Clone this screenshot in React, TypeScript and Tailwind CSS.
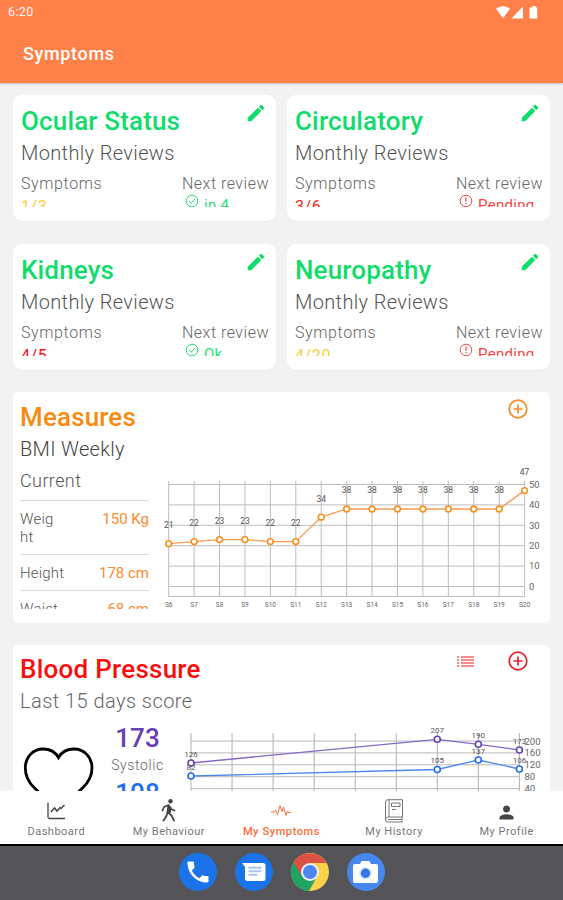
import type { ReactNode } from "react";
import { MdEdit, MdPerson, MdPhone } from "react-icons/md";

type ReviewCardProps = {
    title: string;
    score: string;
    scoreClass: string;
    review: string;
    done: boolean;
};

const reviews: ReviewCardProps[] = [
    { title: "Ocular Status", score: "1/3", scoreClass: "text-[#f9cf3c]", review: "in 4", done: true },
    { title: "Circulatory", score: "3/6", scoreClass: "text-[#f52a22]", review: "Pending", done: false },
    { title: "Kidneys", score: "4/5", scoreClass: "text-[#f5101c]", review: "Ok", done: true },
    { title: "Neuropathy", score: "4/20", scoreClass: "text-[#f9cf3c]", review: "Pending", done: false },
];

const bmi = [21, 22, 23, 23, 22, 22, 34, 38, 38, 38, 38, 38, 38, 38, 47];

const systolic = [
    { day: 0, value: 126, y: 30 },
    { day: 6, value: 207, y: 6.3 },
    { day: 7, value: 190, y: 11.3 },
    { day: 8, value: 173, y: 17 },
];

const diastolic = [
    { day: 0, value: 82, y: 43 },
    { day: 6, value: 105, y: 36.5 },
    { day: 7, value: 137, y: 27 },
    { day: 8, value: 106, y: 36 },
];

function ReviewIcon({ done }: { done: boolean }) {
    return (
        <svg viewBox="0 0 14 14" className="w-[14px] h-[14px] shrink-0" fill="none" stroke="currentColor" strokeWidth="1">
            <circle cx="7" cy="7" r="5.8" />
            {done ? <path d="M4.2 7.2 6.3 9.2 10 5" /> : <path d="M7 3.6v4.2M7 9.1v1.2" strokeWidth="1.2" />}
        </svg>
    );
}

function ReviewCard({ title, score, scoreClass, review, done }: ReviewCardProps) {
    return (
        <div className="relative h-[126px] bg-white rounded-[9px] pl-[8px] pr-[7px] shadow-[0_1px_1px_rgba(0,0,0,0.03)]">
            <MdEdit className="absolute right-[9px] top-[7px] text-[22px] text-[#10dc6c]" />
            <div className="h-[112px] pt-[10px] overflow-hidden">
                <h2 className="text-[26px] leading-[32px] tracking-[0.15px] font-medium text-[#10dc6c]">{title}</h2>
                <p className="text-[20px] leading-[32px] tracking-[0.36px] font-light text-[#555]">Monthly Reviews</p>
                <div className="flex justify-between text-[#666]">
                    <div>
                        <p className="text-[16px] leading-[30px] tracking-[0.6px] font-light">Symptoms</p>
                        <p className={`-mt-[4px] text-[16px] leading-[24px] tracking-[0.6px] ${scoreClass}`}>{score}</p>
                    </div>
                    <div>
                        <p className="text-[16px] leading-[30px] tracking-[0.5px] font-light">Next review</p>
                        <p className={`flex gap-[5px] pl-[3px] text-[15px] leading-[22px] tracking-[0.3px] -mt-[5px] ${done ? "text-[#2ddc78]" : "text-[#f24848]"}`}>
                            <ReviewIcon done={done} />
                            <span>{review}</span>
                        </p>
                    </div>
                </div>
            </div>
        </div>
    );
}

function AddIcon({ className }: { className: string }) {
    return (
        <svg viewBox="0 0 20 20" className={`w-[20px] h-[20px] ${className}`} fill="none" stroke="currentColor" strokeWidth="1.7">
            <circle cx="10" cy="10" r="8.8" />
            <path d="M10 5.5v9M5.5 10h9" />
        </svg>
    );
}

function BmiChart() {
    const x = (i: number) => 13.7 + i * 25.42;
    const y = (v: number) => 121.5 - v * 2.04;
    return (
        <svg viewBox="0 0 395 150" className="w-[395px] h-[150px] shrink-0 font-[Roboto]">
            {bmi.map((_, i) => (
                <line key={i} x1={x(i)} x2={x(i)} y1="16" y2="131.5" stroke="#bdbdbd" />
            ))}
            {[0, 10, 20, 30, 40, 50].map((v) => (
                <g key={v}>
                    <line x1={x(0)} x2={x(14)} y1={y(v)} y2={y(v)} stroke="#bdbdbd" />
                    <text x="374" y={y(v) + 3.2} fontSize="9.5" fill="#666">{v}</text>
                </g>
            ))}
            <line x1={x(0)} x2={x(14)} y1="131.5" y2="131.5" stroke="#bdbdbd" />
            <polyline points={bmi.map((v, i) => `${x(i)},${y(v)}`).join(" ")} fill="none" stroke="#fb9a56" strokeWidth="1.3" />
            {bmi.map((v, i) => (
                <g key={i} textAnchor="middle">
                    <circle cx={x(i)} cy={y(v)} r="2.9" fill="#fff" stroke="#f7901e" strokeWidth="1.6" />
                    <text x={x(i)} y={y(v) - 15.5} fontSize="8.5" fill="#555">{v}</text>
                    <text x={x(i)} y="142" fontSize="6.5" fill="#666">{`S${i + 6}`}</text>
                </g>
            ))}
        </svg>
    );
}

function PressureChart() {
    const x = (i: number) => 16 + i * 41.05;
    const series = [
        { points: systolic, line: "#8468c8", dot: "#6640b4" },
        { points: diastolic, line: "#4a86f0", dot: "#1f6cf5" },
    ];
    return (
        <svg viewBox="0 0 375 62" className="w-[375px] h-[62px] shrink-0 overflow-visible font-[Roboto]">
            {[0, 1, 2, 3, 4, 5, 6, 7, 8].map((i) => (
                <line key={i} x1={x(i)} x2={x(i)} y1="0" y2="62" stroke="#b0b0b0" />
            ))}
            {[200, 160, 120, 80, 40].map((v, i) => (
                <g key={v}>
                    <line x1={x(0)} x2={x(8)} y1={8 + i * 11.9} y2={8 + i * 11.9} stroke="#b8b8b8" />
                    <text x="349.5" y={11.5 + i * 11.9} fontSize="9.5" fill="#666">{v}</text>
                </g>
            ))}
            {series.map(({ points, line, dot }) => (
                <g key={dot} textAnchor="middle">
                    <polyline points={points.map((p) => `${x(p.day)},${p.y}`).join(" ")} fill="none" stroke={line} strokeWidth="1.3" />
                    {points.map((p) => (
                        <g key={p.day}>
                            <circle cx={x(p.day)} cy={p.y} r="3" fill="#fff" stroke={dot} strokeWidth="1.6" />
                            <text x={x(p.day)} y={p.y - 6.5} fontSize="8" fill="#555">{p.value}</text>
                        </g>
                    ))}
                </g>
            ))}
        </svg>
    );
}

function Measure({ label, value }: { label: string; value: string }) {
    return (
        <div className="flex justify-between border-t border-[#ddd] pt-[9px] pb-[8px] text-[15px] leading-[18px]">
            <span className="w-[48px] font-light tracking-[0.2px] text-[#555] whitespace-pre">{label}</span>
            <span className="text-[#f98a35]">{value}</span>
        </div>
    );
}

function Tab({ label, active, children }: { label: string; active?: boolean; children: ReactNode }) {
    return (
        <div className={`flex-1 flex flex-col items-center pt-[7px] ${active ? "text-[#ff6c37]" : "text-[#444]"}`}>
            <div className="h-[25px] flex items-center justify-center">{children}</div>
            <span className={`pt-[1px] text-[11px] leading-[16px] whitespace-nowrap ${active ? "tracking-[0.6px] font-medium" : "tracking-[0.5px] text-[#777]"}`}>{label}</span>
        </div>
    );
}

export default function App() {
    return (
        <div className="w-[563px] h-[900px] flex flex-col overflow-hidden bg-[#f2f2f2] font-[Roboto,sans-serif]">
            <header className="h-[83px] shrink-0 bg-[#ff8048] text-white shadow-[0_1px_2px_rgba(0,0,0,0.2)]">
                <div className="h-[25px] pl-[8px] pr-[25px] flex items-center justify-between text-[12.5px] tracking-[0.4px]">
                    <span>6:20</span>
                    <svg viewBox="0 0 42 13" className="w-[42px] h-[13px]" fill="currentColor">
                        <path d="M0 2.8C4-.6 10-.6 14 2.8L7 12.3z" />
                        <path d="M27 .5V12.5H15.5z" />
                        <path d="M35 1.5h1.5V0h3.5v1.5h1.2v11h-7.7v-11z" />
                    </svg>
                </div>
                <h1 className="pl-[23px] text-[18px] leading-[58px] font-medium tracking-[0.65px]">Symptoms</h1>
            </header>

            <main className="flex-1 min-h-0 overflow-hidden pt-[12px] px-[13px]">
                <div className="grid grid-cols-2 gap-x-[11px] gap-y-[23px]">
                    {reviews.map((r) => (
                        <ReviewCard key={r.title} {...r} />
                    ))}
                </div>

                {/* Measures */}
                <section className="relative mt-[22px] h-[231px] bg-white rounded-[5px] pl-[7px] pt-[9px]">
                    <AddIcon className="absolute right-[22px] top-[7px] text-[#f98a1e]" />
                    <h2 className="text-[26px] leading-[32px] tracking-[0.15px] font-medium text-[#f98a10]">Measures</h2>
                    <p className="text-[20px] leading-[32px] tracking-[0.3px] font-light text-[#444]">BMI Weekly</p>
                    <div className="flex">
                        <div className="w-[129px] h-[144px] overflow-hidden">
                            <p className="text-[18px] leading-[32px] tracking-[0.4px] pb-[3px] font-light text-[#555]">Current</p>
                            <Measure label={"Weig\nht"} value="150 Kg" />
                            <Measure label="Height" value="178 cm" />
                            <Measure label="Waist" value="68 cm" />
                        </div>
                        <div className="ml-[6px]">
                            <BmiChart />
                        </div>
                    </div>
                </section>

                {/* Blood pressure */}
                <section className="relative mt-[22px] h-[260px] bg-white rounded-[5px] pl-[7px] pt-[8px]">
                    <svg viewBox="0 0 17 11" className="absolute right-[76px] top-[11px] w-[17px] h-[11px] text-[#f56a6a]" stroke="currentColor" strokeWidth="1.3">
                        <path d="M0 1h2.2M0 4h2.2M0 7h2.2M0 10h2.2M4 1h13M4 4h13M4 7h13M4 10h13" />
                    </svg>
                    <AddIcon className="absolute right-[22px] top-[6px] text-[#e8232b]" />
                    <h2 className="text-[26px] leading-[32px] tracking-[0.25px] font-medium text-[#fb0d0d]">Blood Pressure</h2>
                    <p className="text-[20px] leading-[32px] tracking-[0.45px] font-light text-[#666]">Last 15 days score</p>
                    <div className="flex">
                        <svg viewBox="0 0 72 66" className="mt-[30px] ml-[3px] w-[72px] h-[66px]" fill="none" stroke="#000" strokeWidth="2.8">
                            <path d="M35.500 64 11.500 41C4 34 2.300 28 2.300 21C2.300 10 10 2 20 2C28 2 33 6 35.500 10.500C38 6 43 2 51 2C61 2 69 10 69 21C69 28 67 34 59.500 41z" />
                        </svg>
                        <div className="w-[67px] ml-[9px] pt-[1px] text-center">
                            <p className="text-[26px] leading-[40px] font-medium text-[#6640b4]">173</p>
                            <p className="text-[14px] leading-[15px] tracking-[0.6px] font-light text-[#666]">Systolic</p>
                            <p className="text-[26px] leading-[40px] font-medium text-[#1f6cf5]">108</p>
                        </div>
                        <div className="ml-[4px] pt-[16px]">
                            <PressureChart />
                        </div>
                    </div>
                </section>
            </main>

            <nav className="relative h-[53px] shrink-0 flex bg-white">
                <Tab label="Dashboard">
                    <svg viewBox="0 0 18 18" className="w-[18px] h-[18px]" fill="none" stroke="currentColor" strokeWidth="1.3">
                        <path d="M1 .5v14.500q0 1.500 1.500 1.500H18" />
                        <path d="M4 10 7.500 6l2.500 3 3-3.500 1 1 3.500-3.500" strokeWidth="1.500" />
                    </svg>
                </Tab>
                <Tab label="My Behaviour">
                    <svg viewBox="0 0 16 23" className="w-[16px] h-[23px]" fill="none" stroke="currentColor" strokeWidth="1.8" strokeLinecap="round" strokeLinejoin="round">
                        <circle cx="9.500" cy="2.300" r="2.200" fill="currentColor" stroke="none" />
                        <path d="M1.500 11.500 3 8l4.500-2 2.500 4 3.500 1.500M7.500 6.500 6.500 13l4 3.500 2.500 5M6.500 13 5.500 17 2.500 21.500" />
                        <path d="M7.500 6.500 6.500 13l3 .5.500-5" fill="currentColor" strokeWidth="1" />
                    </svg>
                </Tab>
                <Tab label="My Symptoms" active>
                    <svg viewBox="0 0 20 14" className="w-[20px] h-[14px]" fill="none" stroke="currentColor" strokeWidth="1">
                        <path d="M0 8h3l1.500-2 2 4.500L9 1.500l2 6L12.500 3l2.500 8.500L16.500 7l1 1.500H20" />
                    </svg>
                </Tab>
                <Tab label="My History">
                    <svg viewBox="0 0 18 24" className="w-[18px] h-[24px] text-[#777]" fill="none" stroke="currentColor" strokeWidth="1">
                        <path d="M17.500 18V.7H3Q.5.7.5 3v18Q.5 23 3 23h14.500M17.500 18H3Q.5 18 .5 21M4 .7V18M17 18v5M3 20.500h14" />
                        <path d="M6.500 4H15v3.500H6.500zM7 10.500h4" />
                    </svg>
                </Tab>
                <Tab label="My Profile">
                    <MdPerson className="mt-[4px] text-[21px]" />
                </Tab>
            </nav>

            <footer className="h-[56px] shrink-0 flex justify-center gap-[18px] border-t-2 border-black bg-[#545357] pt-[7px]">
                <div className="w-[38px] h-[38px] rounded-full bg-[#1a73e8] flex items-center justify-center text-white">
                    <MdPhone className="text-[28px]" />
                </div>
                <div className="w-[38px] h-[38px] rounded-full bg-[#1a73e8] flex items-center justify-center">
                    <svg viewBox="0 0 24 18" className="w-[24px] h-[18px]">
                        <path d="M0 0h21q2.500 0 2.500 2.500v13Q23.500 18 21 18H5.500Q3 18 3 15.500V4z" fill="#fff" />
                        <path d="M6.500 4.700h13M6.500 8.200h13M6.500 11.700h9" stroke="#a9c6f3" strokeWidth="1.900" />
                    </svg>
                </div>
                <svg viewBox="0 0 38 38" className="w-[38px] h-[38px]">
                    <circle cx="19" cy="19" r="19" fill="#fbd04b" />
                    <path d="M19 19 18 38A19 19 0 0 1 2.500 9.500z" fill="#1fa463" />
                    <path d="M2.500 9.500A19 19 0 0 1 35.500 10H19L11 23z" fill="#dd5144" />
                    <path d="M11.500 23.500 18 38l8-14.500z" fill="#1fa463" />
                    <circle cx="19" cy="19" r="9" fill="#f1f1f1" />
                    <circle cx="19" cy="19" r="7" fill="#4b87f0" />
                </svg>
                <div className="w-[38px] h-[38px] rounded-full bg-[#4688ee] flex items-center justify-center">
                    <svg viewBox="0 0 25 22" className="w-[25px] h-[22px]">
                        <path d="M2 3h5l1.500-3h8L18 3h5q2 0 2 2v15q0 2-2 2H2q-2 0-2-2V5q0-2 2-2z" fill="#fff" />
                        <circle cx="12.500" cy="12.200" r="6.300" fill="#dce7fb" />
                        <circle cx="12.500" cy="12.200" r="4.700" fill="#3478e8" />
                    </svg>
                </div>
            </footer>
        </div>
    );
}
